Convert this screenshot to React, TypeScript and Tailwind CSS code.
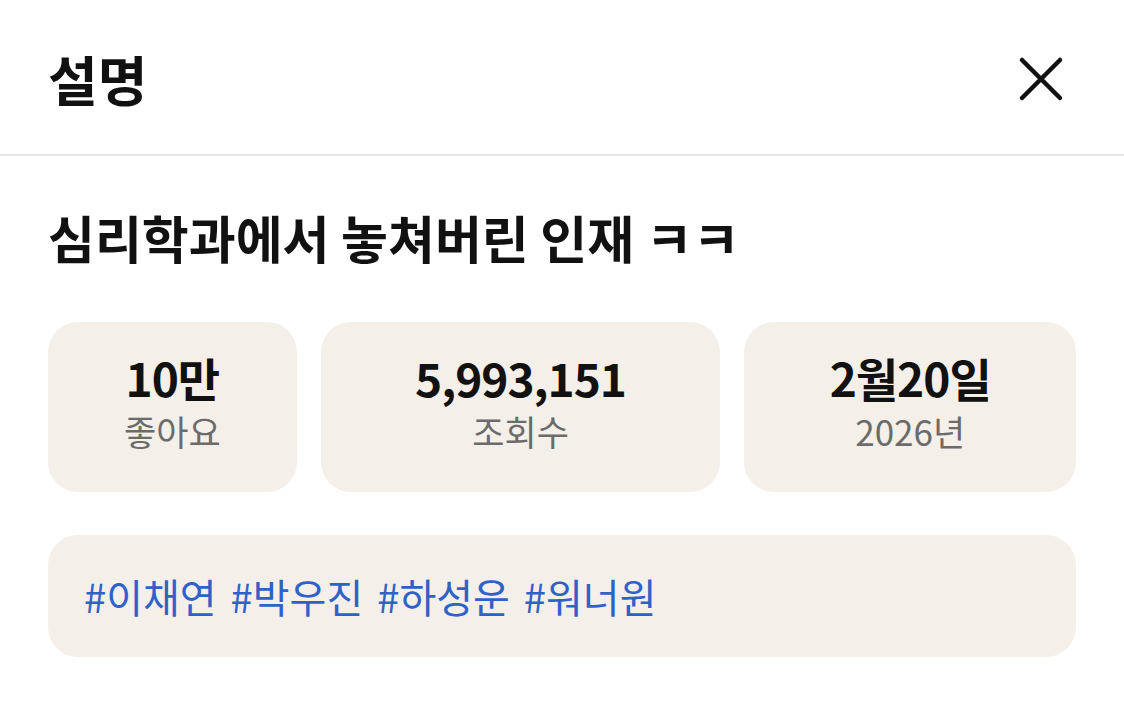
const stats = [
  { value: "10만", label: "좋아요", width: "w-[249px]" },
  { value: "5,993,151", label: "조회수", width: "w-[400px]" },
  { value: "2월20일", label: "2026년", width: "w-[332px]" },
];

const tags = ["#이채연", "#박우진", "#하성운", "#워너원"];

export default function App() {
  return (
    <div
      className="w-[1124px] h-[711px] bg-white overflow-hidden"
      style={{ fontFamily: '"Noto Sans CJK KR", "Noto Sans", sans-serif' }}
    >
      {/* Header */}
      <header className="h-[156px] flex items-center justify-between pl-12 pr-[60px] pt-1 border-b-2 border-[#e6e6e6]">
        <h1 className="text-[54px] font-bold leading-none text-[#111]">설명</h1>
        <button className="w-[46px] h-[46px] flex items-center justify-center">
          <svg width="46" height="46" viewBox="0 0 46 46" fill="none">
            <path
              d="M4 4L42 42M42 4L4 42"
              stroke="#111"
              strokeWidth="4.5"
              strokeLinecap="round"
            />
          </svg>
        </button>
      </header>

      <section className="px-12">
        {/* Title */}
        <h2 className="mt-[56px] text-[51px] font-bold leading-none text-[#111]">
          심리학과에서 놓쳐버린 인재 ㅋㅋ
        </h2>

        {/* Stats */}
        <div className="mt-[59px] flex gap-6">
          {stats.map((item, i) => (
            <div
              key={i}
              className={`${item.width} h-[170px] rounded-[30px] bg-[#f4efe9] flex flex-col items-center justify-center pb-[13px]`}
            >
              <p className="text-[46px] font-bold leading-none text-[#111] tracking-[-1px]">
                {item.value}
              </p>
              <p className="mt-[13px] text-[35px] leading-none text-[#6b6b6b]">
                {item.label}
              </p>
            </div>
          ))}
        </div>

        {/* Tags */}
        <div className="mt-[43px] h-[122px] rounded-[30px] bg-[#f4efe9] flex items-center px-[36px]">
          <p className="text-[40px] leading-none text-[#2f62c9] flex gap-[14px]">
            {tags.map((tag) => (
              <span key={tag}>{tag}</span>
            ))}
          </p>
        </div>
      </section>
    </div>
  );
}
